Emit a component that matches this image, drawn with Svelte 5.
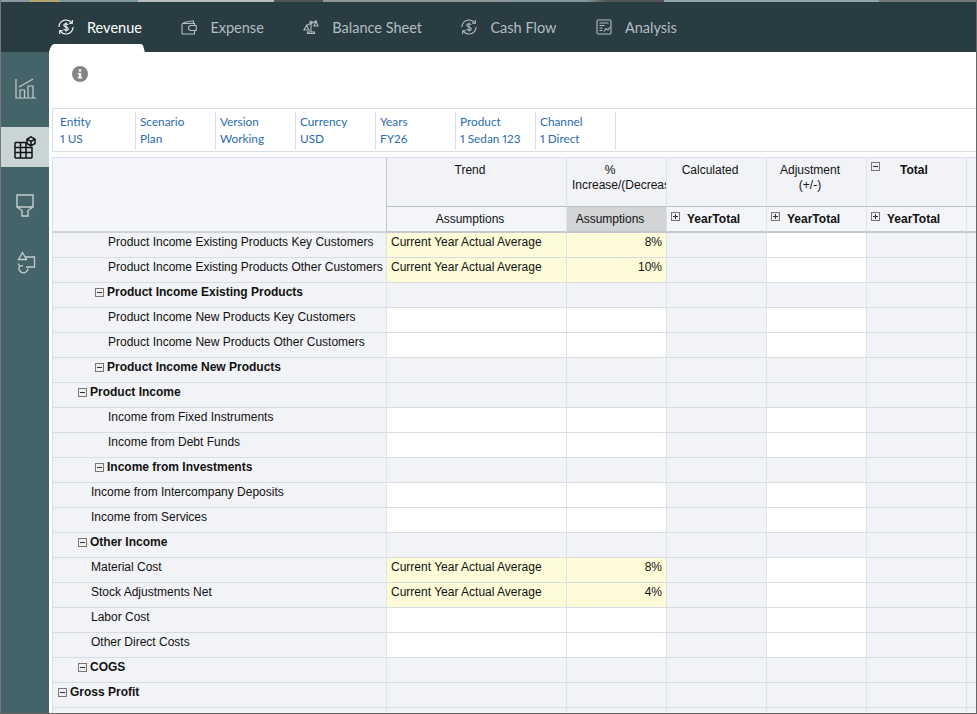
<script>
  const tabs = [
    { name: 'Revenue', icon: 'dollar', active: true },
    { name: 'Expense', icon: 'wallet' },
    { name: 'Balance Sheet', icon: 'scale' },
    { name: 'Cash Flow', icon: 'dollar' },
    { name: 'Analysis', icon: 'report' }
  ];

  const pov = [
    ['Entity', '1 US'],
    ['Scenario', 'Plan'],
    ['Version', 'Working'],
    ['Currency', 'USD'],
    ['Years', 'FY26'],
    ['Product', '1 Sedan 123'],
    ['Channel', '1 Direct']
  ];

  // level sets the indent, kind: a = yellow assumption row, w = white input row, t = total row
  const rows = [
    { label: 'Product Income Existing Products Key Customers', level: 3, kind: 'a', pct: '8%' },
    { label: 'Product Income Existing Products Other Customers', level: 3, kind: 'a', pct: '10%' },
    { label: 'Product Income Existing Products', level: 2, kind: 't' },
    { label: 'Product Income New Products Key Customers', level: 3, kind: 'w' },
    { label: 'Product Income New Products Other Customers', level: 3, kind: 'w' },
    { label: 'Product Income New Products', level: 2, kind: 't' },
    { label: 'Product Income', level: 1, kind: 't' },
    { label: 'Income from Fixed Instruments', level: 3, kind: 'w' },
    { label: 'Income from Debt Funds', level: 3, kind: 'w' },
    { label: 'Income from Investments', level: 2, kind: 't' },
    { label: 'Income from Intercompany Deposits', level: 2, kind: 'w' },
    { label: 'Income from Services', level: 2, kind: 'w' },
    { label: 'Other Income', level: 1, kind: 't' },
    { label: 'Material Cost', level: 2, kind: 'a', pct: '8%' },
    { label: 'Stock Adjustments Net', level: 2, kind: 'a', pct: '4%' },
    { label: 'Labor Cost', level: 2, kind: 'w' },
    { label: 'Other Direct Costs', level: 2, kind: 'w' },
    { label: 'COGS', level: 1, kind: 't' },
    { label: 'Gross Profit', level: 0, kind: 't' },
    { label: '', level: 0, kind: 'e' }
  ];

  function inputClass(kind) {
    if (kind === 'a') return 'yellow';
    if (kind === 'w') return 'white';
    return '';
  }
</script>

{#snippet tabIcon(icon)}
  <svg class="tab-icon" viewBox="0 0 16 16" fill="none" stroke="currentColor" stroke-width="1.1">
    {#if icon === 'dollar'}
      <path d="M13.800 3.800A7.200 7.200 0 0 0 1.500 5.200M2.200 12.200A7.200 7.200 0 0 0 14.500 10.800M.9 8c0-.9.2-1.900.6-2.800M15.100 8c0 .9-.2 1.900-.6 2.800" />
      <path d="M14.300 1v3.300H11M1.700 15v-3.300H5" />
      <path d="M10.300 5.900C9.900 5 9 4.700 8 4.700c-1.300 0-2.200.6-2.200 1.600 0 2.200 4.500 1.200 4.500 3.400 0 1-.9 1.600-2.300 1.600-1.100 0-2-.5-2.400-1.400M8 3.400v9.200" />
    {:else if icon === 'wallet'}
      <path d="M12.500 4.500V1.800L2.500 3.500M1 5v10h12.500v-3M1 4.500h12.500V6" />
      <path d="M10 6.500h5.200v5H10a2.500 2.500 0 0 1 0-5z" />
    {:else if icon === 'scale'}
      <path d="M8 3v10M4.500 14.500h7V13h-7zM3.500 6.500L13 2" />
      <circle cx="8" cy="3.500" r="1.200" />
      <path d="M3.500 6.500L1 11h5zM13 2l-2 5h4z" />
    {:else}
      <rect x="1" y="1" width="14" height="14" rx="1" />
      <path d="M3.500 4h9M3.500 6.500h5M3.500 9h3M3.500 11.500h3" />
      <path d="M8 12.500l2-3 2 1.500 2-3" />
    {/if}
  </svg>
{/snippet}

{#snippet box(open)}
  <svg class="box" viewBox="0 0 9 9">
    <rect x="0.5" y="0.5" width="8" height="8" fill="#eceef0" stroke="#777" />
    <path d="M2 4.500h5" stroke="#333" />
    {#if open === 'plus'}
      <path d="M4.500 2v5" stroke="#333" />
    {/if}
  </svg>
{/snippet}

<div class="app">
  <div class="strip"></div>
  <nav class="tabs">
    {#each tabs as tab}
      <div class="tab" class:active={tab.active}>
        {@render tabIcon(tab.icon)}
        <span>{tab.name}</span>
      </div>
    {/each}
  </nav>

  <div class="body">
    <aside class="side">
      <div class="side-item">
        <svg viewBox="0 0 22 23" fill="none" stroke="#c3cdcf" stroke-width="1.200">
          <path d="M2 3v19h20M5 11L19 3" />
          <path d="M6 22v-8h4.500v8M14 22V10h5v12" />
        </svg>
      </div>
      <div class="side-item current">
        <svg viewBox="0 0 22 23" fill="none" stroke="#111" stroke-width="1.500">
          <path d="M1 6.500h11M1 11.500h17M1 16.500h17M1 22h17M1 6.500V22M6.500 6.500V22M12 6.500V22M18 11v11" />
          <path d="M17 .8l4 2.300v4.400l-4 2.300-4-2.300V3.100zM13 3.100l4 2.300 4-2.300M17 5.400v4.600" />
        </svg>
      </div>
      <div class="side-item">
        <svg viewBox="0 0 22 23" fill="none" stroke="#c3cdcf" stroke-width="1.400">
          <path d="M3 1h16v12H3zM3 13l5 3.500V22h6v-5.500l5-3.500" />
        </svg>
      </div>
      <div class="side-item">
        <svg viewBox="0 0 22 23" fill="none" stroke="#c3cdcf" stroke-width="1.300">
          <path d="M8.500 1.500L4.500 8.500h8zM11 6h9.500v10H12" />
          <path d="M14 17.500a4.500 4.500 0 1 1-8-3M4 12.500l1.800 2.800 3-.8" />
        </svg>
      </div>
    </aside>

    <main class="main">
      <div class="info">
        <svg viewBox="0 0 16 16" class="info-icon">
          <circle cx="8" cy="8" r="8" fill="#858585" />
          <rect x="6.800" y="3.400" width="2.400" height="2.200" fill="#fff" />
          <path d="M5.800 7h3.400v4.200h1v1.300H5.800v-1.300h1V8.300h-1z" fill="#fff" />
        </svg>
      </div>

      <div class="pov">
        {#each pov as item}
          <div class="pov-item">
            <span>{item[0]}</span>
            <span>{item[1]}</span>
          </div>
        {/each}
      </div>

      <div class="grid">
        <div class="corner"></div>
        <div class="head h1 center">Trend</div>
        <div class="head h1 center clip">%<br /><span class="nowrap">Increase/(Decrease)</span></div>
        <div class="head h1 center">Calculated</div>
        <div class="head h1 center">Adjustment<br />(+/-)</div>
        <div class="head h1 total">{@render box('minus')}<b>Total</b></div>
        <div class="head h1 last"></div>

        <div class="head h2 center">Assumptions</div>
        <div class="head h2 center picked">Assumptions</div>
        <div class="head h2 year">{@render box('plus')}<b>YearTotal</b></div>
        <div class="head h2 year">{@render box('plus')}<b>YearTotal</b></div>
        <div class="head h2 year">{@render box('plus')}<b>YearTotal</b></div>
        <div class="head h2 last"></div>

        {#each rows as row}
          <div class="cell label lv{row.level}" class:bold={row.kind === 't'}>
            {#if row.kind === 't'}{@render box('row')}{/if}
            <span>{row.label}</span>
          </div>
          <div class="cell {inputClass(row.kind)}">{row.kind === 'a' ? 'Current Year Actual Average' : ''}</div>
          <div class="cell num {inputClass(row.kind)}">{row.pct ?? ''}</div>
          <div class="cell"></div>
          <div class="cell {row.kind === 'a' || row.kind === 'w' ? 'white' : ''}"></div>
          <div class="cell"></div>
          <div class="cell last"></div>
        {/each}
      </div>
    </main>
  </div>
</div>

<style>
  :global(body) {
    margin: 0;
    background: #fff;
  }

  .app {
    width: 977px;
    height: 714px;
    box-sizing: border-box;
    display: flex;
    flex-direction: column;
    overflow: hidden;
    border-left: 1px solid #777;
    border-right: 1px solid #666;
    border-bottom: 1px solid #666;
  }

  .strip {
    height: 2px;
    flex: none;
    background: linear-gradient(90deg, #8a9a9e 0 3%, #b8a570 3% 6%, #7f979f 6% 14%, #b8bec0 14% 28%, #555 28% 33%, #8f9799 33% 52%, #7f979f 52% 60%, #555 62% 68%, #8fa6b0 68% 90%, #777 90%);
  }

  .tabs {
    flex: none;
    height: 50px;
    background: #293c42;
    display: flex;
    gap: 39.500px;
    padding-left: 57px;
    font-family: Lato, "Open Sans", sans-serif;
    font-size: 14.500px;
    color: #b4bdc0;
  }

  .tab {
    position: relative;
    display: flex;
    align-items: center;
    gap: 13px;
    height: 50px;
    box-sizing: border-box;
  }

  .tab.active {
    color: #fff;
  }

  .tab.active::after {
    content: "";
    position: absolute;
    left: -9px;
    right: -3px;
    bottom: 0;
    height: 8px;
    background: #fff;
    clip-path: polygon(0 100%, 1% 60%, 3% 15%, 5% 0, 96% 0, 98% 15%, 99% 60%, 100% 100%);
  }

  .tab-icon {
    width: 16px;
    height: 16px;
  }

  .body {
    flex: 1;
    display: flex;
    min-height: 0;
  }

  .side {
    flex: none;
    width: 48px;
    background: #44646a;
    display: flex;
    flex-direction: column;
    padding-top: 15px;
    box-sizing: border-box;
  }

  .side-item {
    height: 40px;
    display: flex;
    align-items: center;
    justify-content: center;
    margin-bottom: 20px;
  }

  .side-item:nth-child(3) {
    margin-bottom: 17px;
  }

  .side-item svg {
    width: 22px;
    height: 23px;
  }

  .side-item.current {
    background: #c9d4d5;
    margin-bottom: 18px;
  }

  .main {
    flex: 1;
    min-width: 0;
    display: flex;
    flex-direction: column;
    padding-left: 3px;
    background: #fff;
  }

  .info {
    flex: none;
    height: 56px;
    padding: 14px 0 0 20px;
    box-sizing: border-box;
  }

  .info-icon {
    width: 16px;
    height: 16px;
    display: block;
  }

  .pov {
    flex: none;
    height: 44px;
    box-sizing: border-box;
    display: flex;
    padding: 3px 0 0 3px;
    border: 1px solid #d6dfe6;
    border-right: none;
    font-family: Lato, "Open Sans", sans-serif;
    font-size: 11.800px;
    font-variant-numeric: proportional-nums;
    color: #2a6cb0;
  }

  .pov-item {
    width: 80px;
    height: 38px;
    box-sizing: border-box;
    padding: 2px 0 0 4px;
    border-right: 1px solid #d6dfe6;
    display: flex;
    flex-direction: column;
    gap: 2px;
    line-height: 15px;
  }

  .grid {
    flex: 1;
    margin-top: 5px;
    display: grid;
    grid-template-columns: 335px 180px 100px 100px 100px 100px 1fr;
    grid-template-rows: 49px 26px repeat(20, 25px);
    align-content: start;
    overflow: hidden;
    border-top: 1px solid #d6dfe6;
    font-family: "Liberation Sans", Arial, sans-serif;
    font-size: 12px;
    color: #111;
    line-height: 15px;
  }

  .corner {
    grid-row: 1 / 3;
    background: #f5f6fb;
    border-left: 1px solid #d6dfe6;
    border-right: 1px solid #c4c8cc;
    border-bottom: 2px solid #cfd3d6;
  }

  .head {
    background: #f1f3f6;
    border-right: 1px solid #dde3e8;
    box-sizing: border-box;
  }

  .h1 {
    padding-top: 5px;
    border-bottom: 1px solid #bcc0c4;
  }

  .h2 {
    padding-top: 5px;
    border-bottom: 2px solid #c4c8cc;
    background: #f3f5f9;
  }

  .center {
    text-align: center;
    padding-right: 13px;
  }

  .clip {
    overflow: hidden;
  }

  .nowrap {
    white-space: nowrap;
    display: block;
    text-align: left;
    padding-left: 5px;
  }

  .picked {
    background: #d2d4d6;
  }

  .total,
  .year {
    display: flex;
    padding-left: 4px;
  }

  .total b,
  .year b {
    margin-left: 7px;
  }

  .total b {
    margin-left: 20px;
  }

  .total .box {
    margin-top: -1px;
  }

  .box {
    width: 9px;
    height: 9px;
    flex: none;
  }

  .cell {
    background: #f1f3f6;
    border-right: 1px solid #dde3e8;
    border-bottom: 1px solid #d6dde3;
    box-sizing: border-box;
    padding: 2px 4px 0 4px;
    white-space: nowrap;
  }

  .cell.white {
    background: #fff;
  }

  .cell.yellow {
    background: #fefcd8;
  }

  .cell.num {
    text-align: right;
  }

  .label {
    display: flex;
    align-items: flex-start;
    border-left: 1px solid #d6dfe6;
    overflow: hidden;
  }

  .label .box {
    margin: 3px 3px 0 0;
  }

  .bold {
    font-weight: 700;
  }

  .lv0 {
    padding-left: 5px;
  }

  .lv1 {
    padding-left: 25px;
  }

  .lv2 {
    padding-left: 38px;
  }

  .lv2.bold {
    padding-left: 42px;
  }

  .lv3 {
    padding-left: 55px;
  }

  .last {
    border-right: none;
  }
</style>
